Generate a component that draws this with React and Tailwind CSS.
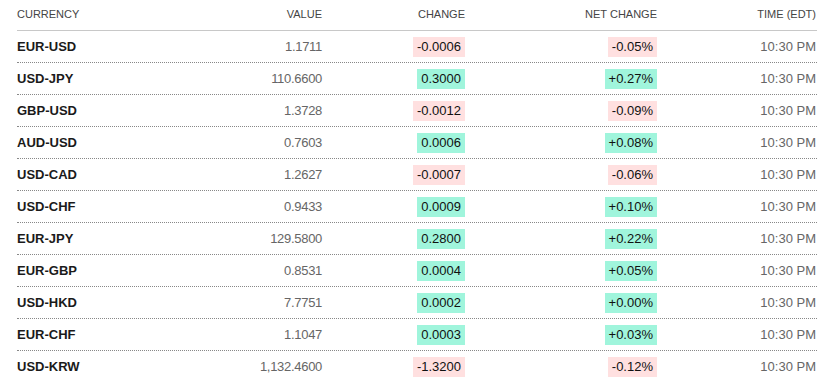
const rows = [
  ["EUR-USD", "1.1711", "-0.0006", "-0.05%"],
  ["USD-JPY", "110.6600", "0.3000", "+0.27%"],
  ["GBP-USD", "1.3728", "-0.0012", "-0.09%"],
  ["AUD-USD", "0.7603", "0.0006", "+0.08%"],
  ["USD-CAD", "1.2627", "-0.0007", "-0.06%"],
  ["USD-CHF", "0.9433", "0.0009", "+0.10%"],
  ["EUR-JPY", "129.5800", "0.2800", "+0.22%"],
  ["EUR-GBP", "0.8531", "0.0004", "+0.05%"],
  ["USD-HKD", "7.7751", "0.0002", "+0.00%"],
  ["EUR-CHF", "1.1047", "0.0003", "+0.03%"],
  ["USD-KRW", "1,132.4600", "-1.3200", "-0.12%"],
];

function Badge({ value }) {
  const down = value.startsWith("-");
  return (
    <span
      className={
        "inline-block px-1 leading-[20px] text-[#111] " +
        (down ? "bg-[#ffe0e0]" : "bg-[#a0f5dc]")
      }
    >
      {value}
    </span>
  );
}

const cols = "grid grid-cols-[150px_155px_143px_192px_160px]";

export default function App() {
  return (
    <div className="bg-white w-[832px] h-[381px] overflow-hidden font-['Liberation_Sans',Arial,sans-serif]">
      <div className="w-[800px] ml-[17px]">
        <div
          className={`${cols} h-[31px] items-center pb-[2px] border-b border-[#c8c8c8] text-[11px] text-[#444] uppercase`}
        >
          <div>Currency</div>
          <div className="text-right">Value</div>
          <div className="text-right">Change</div>
          <div className="text-right">Net Change</div>
          <div className="text-right pr-px">Time (EDT)</div>
        </div>
        {rows.map(([name, value, change, net]) => (
          <div
            key={name}
            className={`${cols} h-[32px] items-center border-b border-dotted border-[#888] text-[13px]`}
          >
            <div className="font-bold text-[#1a1a1a]">{name}</div>
            <div className="text-right text-[#666] tracking-[-0.3px]">{value}</div>
            <div className="text-right">
              <Badge value={change} />
            </div>
            <div className="text-right">
              <Badge value={net} />
            </div>
            <div className="text-right pr-px text-[#666]">10:30 PM</div>
          </div>
        ))}
      </div>
    </div>
  );
}
